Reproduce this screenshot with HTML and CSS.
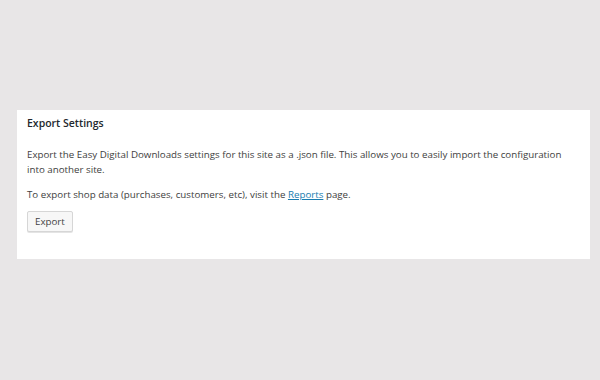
FILE: index.html
```html
<!DOCTYPE html>
<html lang="en">
<head>
<meta charset="UTF-8">
<title>Export Settings</title>
<link rel="stylesheet" href="styles.css">
</head>
<body>
<div class="wrap">
  <div class="postbox">
    <h3 class="hndle">Export Settings</h3>
    <div class="inside">
      <p>Export the Easy Digital Downloads settings for this site as a .json file. This allows you to easily import the configuration into another site.</p>
      <p>To export shop data (purchases, customers, etc), visit the <a href="#">Reports</a> page.</p>
      <button type="button" class="button">Export</button>
    </div>
  </div>
</div>
</body>
</html>
```
FILE: styles.css
```css
* { box-sizing: border-box; }
body { margin: 0; background: #e8e6e7; font-family: "Open Sans", sans-serif; color: #3e3e3e; }
.wrap { padding: 110px 10px 0 17px; }
.postbox { background: #fff; width: 573px; height: 149px; }
.hndle { margin: 0; padding: 6px 10px 0; font-size: 10.5px; font-weight: 600; color: #23282d; line-height: 15px; }
.inside { padding: 0 10px; font-size: 9.75px; line-height: 15px; }
.inside p { margin: 16px 0 10px; }
.inside p + p { margin-top: 0; margin-bottom: 9px; }
.inside a { color: #1a7db0; }
.button { display: block; font-family: inherit; font-size: 9.75px; color: #444; background: #f7f7f7; border: 1px solid #d6d6d6; border-radius: 2px; height: 21px; padding: 0 7px; box-shadow: 0 1px 0 #e4e4e4; }
```
